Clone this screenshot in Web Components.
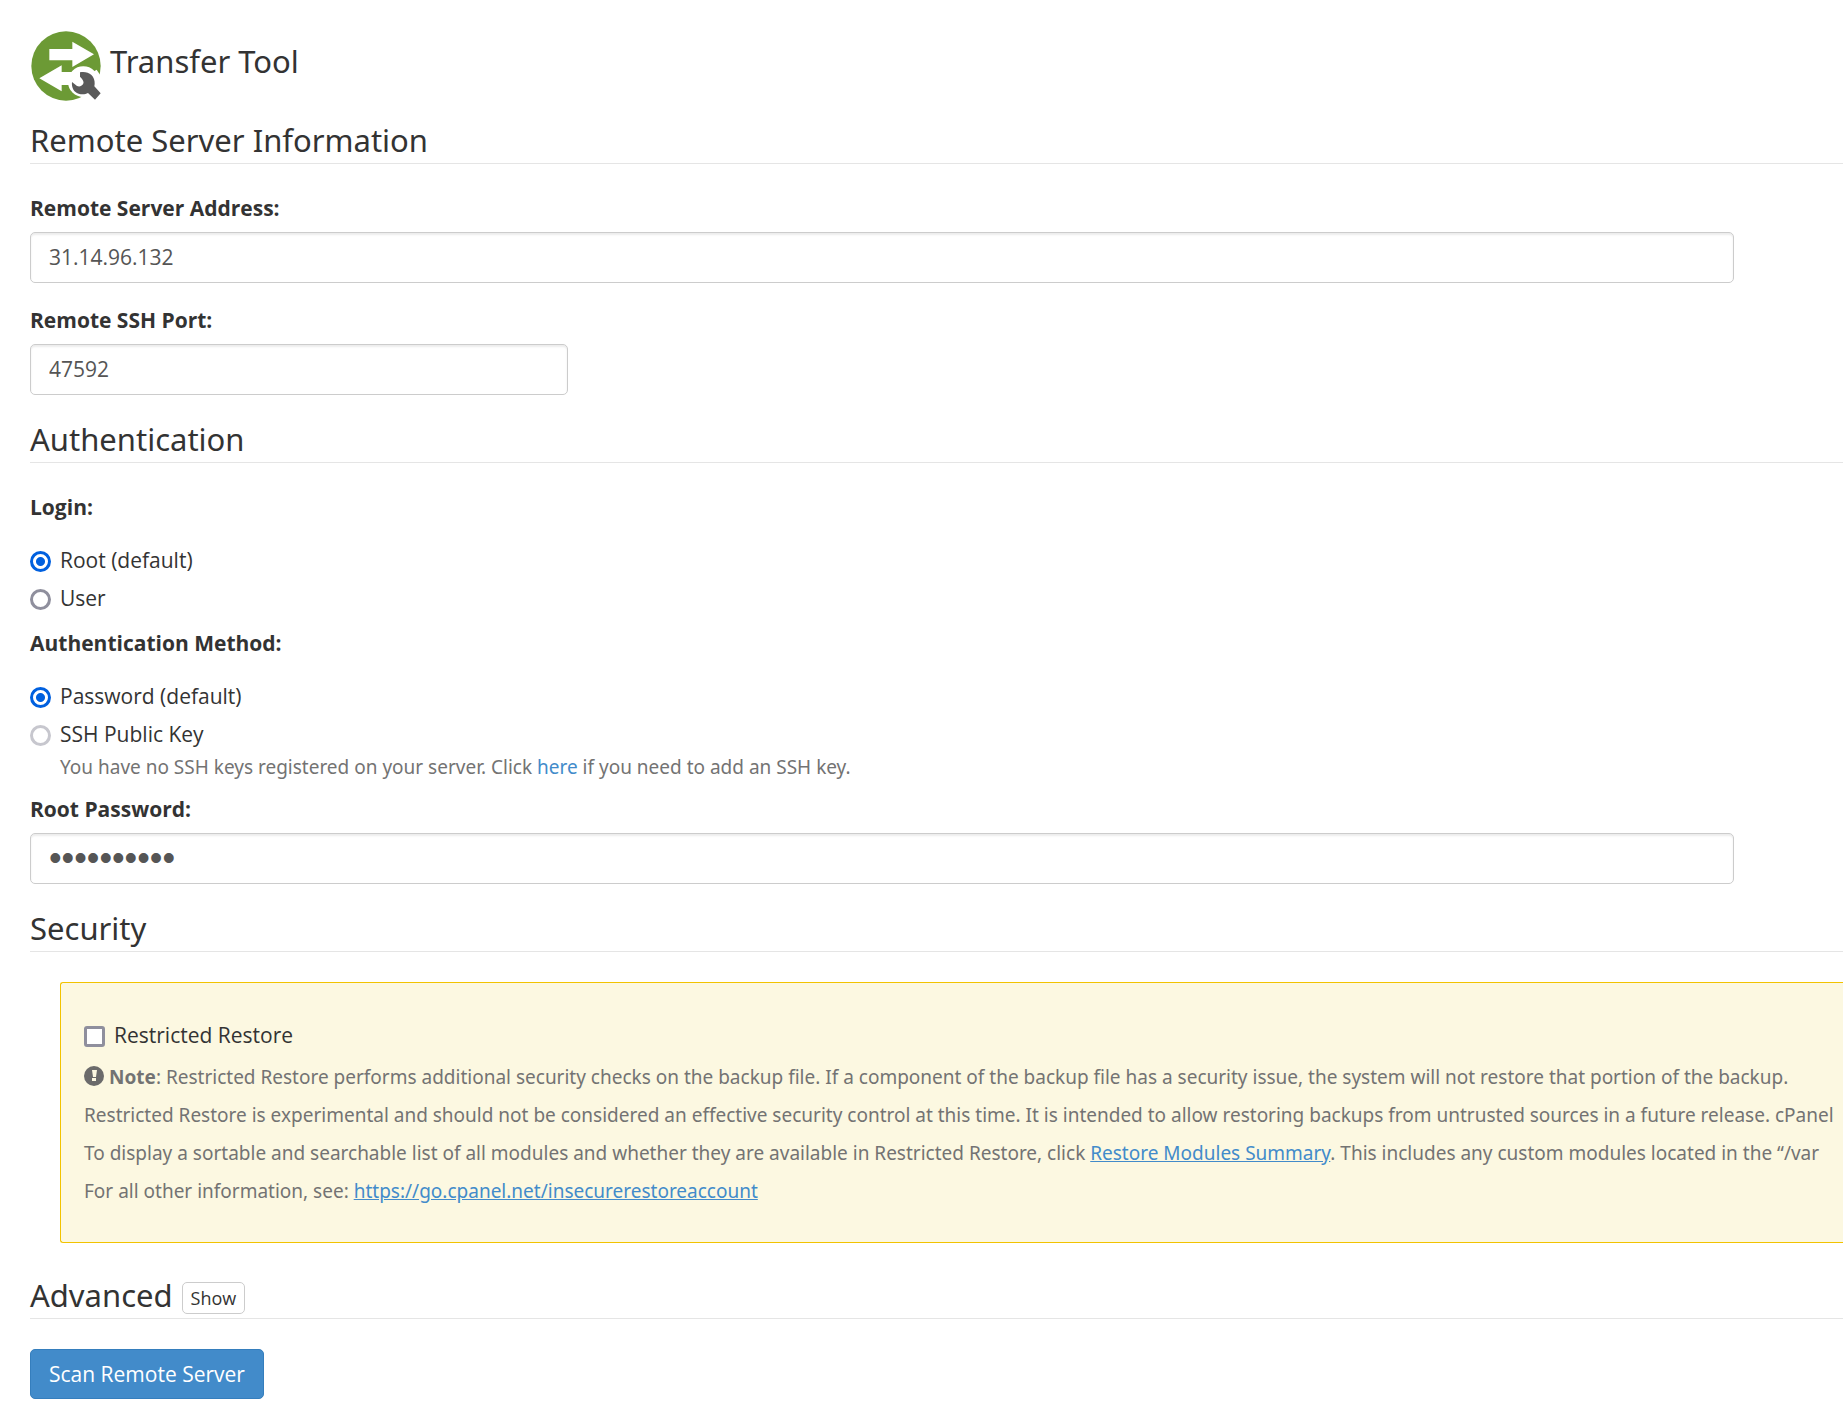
<!DOCTYPE html>
<html lang="en">
<head>
<meta charset="utf-8">
<title>Transfer Tool</title>
<style>
  body {
    margin: 0;
    background-color: #fff;
    color: #333;
    font-family: "Open Sans", "Noto Sans", sans-serif;
    font-size: 21px;
    line-height: 30px;
    overflow-x: hidden;
  }
</style>
</head>
<body>
<transfer-page></transfer-page>

<script>
  class ShadowElement extends HTMLElement {
    constructor() {
      super();
      this.attachShadow({ mode: "open" });
      this.shadowRoot.appendChild(this.getTemplate().content.cloneNode(true));
    }

    getTemplate() {
      const template = document.createElement("template");
      template.innerHTML = this.markup();
      return template;
    }
  }

  class TransferIcon extends ShadowElement {
    markup() {
      return `
        <style>
          :host { display: block; width: 70px; height: 70px; }
          svg { display: block; width: 100%; height: 100%; }
        </style>
        <svg viewBox="0 0 210 210" aria-hidden="true">
          <circle cx="105" cy="105" r="104" fill="#6c9a35"/>
          <path fill="#fff" d="M55 54h69V32l65 38-65 38V88H55zM25 142l67-39v20h50v39H92v19z"/>
          <circle cx="157" cy="152" r="46" fill="#fff"/>
          <path fill="#fff" d="M113 166l84-50 13 20v74h-54l4-7z"/>
          <path fill="#5a5a5a" d="M147 124c22-5 46 8 44 35l-1 7 19 21-17 19-21-20c-8 5-20 5-28 2-14-4-22-18-20-35l15 12c8 3 14 0 18-5 4-6 1-14-9-23z"/>
        </svg>
      `;
    }
  }

  class SectionHeading extends ShadowElement {
    markup() {
      return `
        <style>
          :host { display: block; }
          h3 {
            display: flex;
            align-items: flex-end;
            gap: 9px;
            margin: 0;
            padding-bottom: 2px;
            border-bottom: 1px solid #e5e5e5;
            font-family: "Noto Sans", "Open Sans", sans-serif;
            font-size: 31px;
            font-weight: 400;
            line-height: 42px;
          }
        </style>
        <h3><slot></slot></h3>
      `;
    }
  }

  class TextField extends ShadowElement {
    markup() {
      return `
        <style>
          :host { display: block; }
          label {
            display: block;
            margin-bottom: 10px;
            font-weight: 700;
            line-height: 28px;
          }
          input {
            display: block;
            box-sizing: border-box;
            width: 94%;
            height: 51px;
            padding: 0 18px 2px;
            border: 1px solid #ccc;
            border-radius: 5px;
            background-color: #fff;
            box-shadow: inset 0 2px 2px rgba(0, 0, 0, 0.08);
            color: #555;
            font: inherit;
          }
          input[type="password"] {
            font-family: "Liberation Sans", sans-serif;
            font-size: 36px;
          }
          :host([size="small"]) input { width: 30%; max-width: 538px; }
        </style>
        <label for="field"></label>
        <input id="field">
      `;
    }

    connectedCallback() {
      const input = this.shadowRoot.querySelector("input");
      this.shadowRoot.querySelector("label").textContent = this.getAttribute("label");
      input.type = this.getAttribute("type") || "text";
      input.value = this.getAttribute("value") || "";
    }
  }

  class RadioGroup extends ShadowElement {
    markup() {
      return `
        <style>
          :host { display: block; }
          fieldset { margin: 0; padding: 0; border: 0; }
          legend {
            padding: 0;
            margin-bottom: 24px;
            font-weight: 700;
            line-height: 28px;
          }
          #options {
            display: flex;
            flex-direction: column;
            gap: 8px;
          }
          .option {
            display: flex;
            align-items: flex-start;
            gap: 9px;
          }
          input {
            appearance: none;
            box-sizing: border-box;
            width: 21px;
            height: 21px;
            margin: 6px 0 0;
            border: 3px solid #8f8f9d;
            border-radius: 50%;
            background-color: #fff;
          }
          input:checked {
            border-color: #0060df;
            background-image: radial-gradient(circle, #0060df 4px, transparent 5px);
          }
          input:disabled { border-color: #c7c7ce; }
          ::slotted(*) { margin: 6px 0 0 30px; }
        </style>
        <fieldset>
          <legend></legend>
          <div id="options"></div>
          <slot></slot>
        </fieldset>
      `;
    }

    connectedCallback() {
      this.shadowRoot.querySelector("legend").textContent = this.getAttribute("label");
    }

    updateOptions(options) {
      const container = this.shadowRoot.querySelector("#options");
      container.innerHTML = "";

      options.forEach((option) => {
        const row = document.createElement("div");
        row.classList.add("option");

        const input = document.createElement("input");
        input.type = "radio";
        input.name = this.getAttribute("name");
        input.id = option.id;
        input.checked = Boolean(option.checked);
        input.disabled = Boolean(option.disabled);

        const label = document.createElement("label");
        label.htmlFor = option.id;
        label.textContent = option.label;

        row.append(input, label);
        container.appendChild(row);
      });
    }
  }

  class CheckOption extends ShadowElement {
    markup() {
      return `
        <style>
          :host {
            display: flex;
            align-items: flex-start;
            gap: 9px;
          }
          input {
            appearance: none;
            box-sizing: border-box;
            width: 21px;
            height: 21px;
            margin: 6px 0 0;
            border: 3px solid #8f8f9d;
            border-radius: 3px;
            background-color: #fff;
          }
          input:checked { background-color: #0060df; }
        </style>
        <input type="checkbox" id="check">
        <label for="check"><slot></slot></label>
      `;
    }
  }

  // Yellow callout, runs to the right edge of the window
  class WarningPanel extends ShadowElement {
    markup() {
      return `
        <style>
          :host {
            display: block;
            padding: 37px 0 32px 23px;
            border: 1px solid #f2c300;
            border-right: 0;
            border-radius: 3px 0 0 3px;
            background-color: #fcf8e1;
            white-space: nowrap;
            overflow: hidden;
          }
        </style>
        <slot></slot>
      `;
    }
  }

  class ActionButton extends ShadowElement {
    markup() {
      return `
        <style>
          :host { display: inline-block; }
          button {
            display: block;
            box-sizing: border-box;
            height: 50px;
            padding: 0 18px;
            border: 1px solid #357ebd;
            border-radius: 5px;
            background-color: #428bca;
            color: #fff;
            font: inherit;
            cursor: pointer;
          }
          :host([kind="small"]) { padding-bottom: 2px; }
          :host([kind="small"]) button {
            height: 32px;
            padding: 0 8px;
            border-color: #ccc;
            background-color: #fff;
            color: #333;
            font-family: "Open Sans", sans-serif;
            font-size: 18px;
            line-height: 28px;
          }
        </style>
        <button type="button"><slot></slot></button>
      `;
    }
  }

  class TransferPage extends ShadowElement {
    markup() {
      return `
        <style>
          :host {
            display: block;
            padding: 31px 0 22px 30px;
          }
          header {
            display: flex;
            align-items: flex-start;
            gap: 9px;
            height: 70px;
            padding-left: 1px;
          }
          h1 {
            margin: 0;
            padding-top: 9px;
            font-family: "Noto Sans", "Open Sans", sans-serif;
            font-size: 31px;
            font-weight: 400;
            line-height: 42px;
          }
          section-heading { margin-bottom: 30px; }
          header + section-heading { margin-top: 18px; }
          .fields { display: flex; flex-direction: column; gap: 23px; }
          .methods { display: flex; flex-direction: column; gap: 16px; }
          section { margin-bottom: 23px; }
          .help, .notes {
            color: #737373;
            font-family: "Noto Sans", "Open Sans", sans-serif;
            font-size: 19px;
            line-height: 24px;
          }
          a { color: #428bca; }
          .help a { text-decoration: none; }
          warning-panel { margin: 0 0 31px 30px; }
          .notes { margin-top: 8px; line-height: 38px; }
          .notes p { margin: 0; }
          .notes svg { width: 20px; height: 20px; vertical-align: -2px; }
        </style>
        <header>
          <transfer-icon></transfer-icon>
          <h1>Transfer Tool</h1>
        </header>

        <section-heading>Remote Server Information</section-heading>
        <section class="fields">
          <text-field label="Remote Server Address:" value="31.14.96.132"></text-field>
          <text-field label="Remote SSH Port:" value="47592" size="small"></text-field>
        </section>

        <section-heading>Authentication</section-heading>
        <section class="methods">
          <radio-group id="login" name="login" label="Login:"></radio-group>
          <radio-group id="method" name="method" label="Authentication Method:">
            <div class="help">You have no SSH keys registered on your server. Click <a href="#keys">here</a> if you need to add an SSH key.</div>
          </radio-group>
          <text-field label="Root Password:" type="password" value="rootpasswd"></text-field>
        </section>

        <section-heading>Security</section-heading>
        <warning-panel>
          <check-option>Restricted Restore</check-option>
          <div class="notes">
            <p><svg viewBox="0 0 20 20" aria-hidden="true"><circle cx="10" cy="10" r="10" fill="#6b6b6b"/><path fill="#fcf8e1" d="M8 4h5l-1 7H9zM8 12h4v3H8z"/></svg> <strong>Note</strong>: Restricted Restore performs additional security checks on the backup file. If a component of the backup file has a security issue, the system will not restore that portion of the backup.</p>
            <p>Restricted Restore is experimental and should not be considered an effective security control at this time. It is intended to allow restoring backups from untrusted sources in a future release. cPanel</p>
            <p>To display a sortable and searchable list of all modules and whether they are available in Restricted Restore, click <a href="#modules">Restore Modules Summary</a>. This includes any custom modules located in the “/var</p>
            <p>For all other information, see: <a href="#account">https://go.cpanel.net/insecurerestoreaccount</a></p>
          </div>
        </warning-panel>

        <section-heading>Advanced <action-button kind="small">Show</action-button></section-heading>
        <action-button>Scan Remote Server</action-button>
      `;
    }

    connectedCallback() {
      this.shadowRoot.querySelector("#login").updateOptions([
        { id: "root", label: "Root (default)", checked: true },
        { id: "user", label: "User" }
      ]);
      this.shadowRoot.querySelector("#method").updateOptions([
        { id: "password", label: "Password (default)", checked: true },
        { id: "key", label: "SSH Public Key", disabled: true }
      ]);
    }
  }

  customElements.define("transfer-icon", TransferIcon);
  customElements.define("section-heading", SectionHeading);
  customElements.define("text-field", TextField);
  customElements.define("radio-group", RadioGroup);
  customElements.define("check-option", CheckOption);
  customElements.define("warning-panel", WarningPanel);
  customElements.define("action-button", ActionButton);
  customElements.define("transfer-page", TransferPage);
</script>
</body>
</html>
